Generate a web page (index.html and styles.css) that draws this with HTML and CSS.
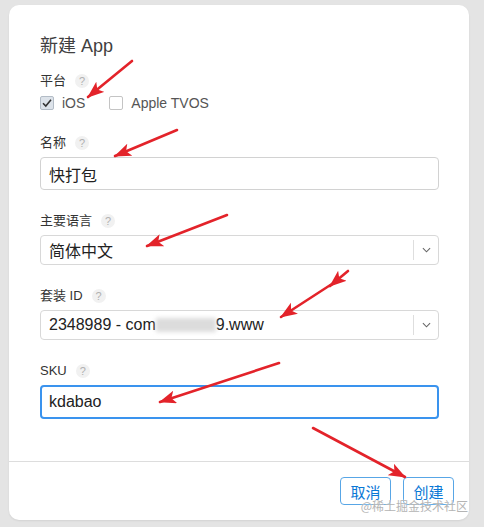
FILE: index.html
```html
<!DOCTYPE html>
<html lang="zh-CN">
<head>
<meta charset="utf-8">
<title>新建 App</title>
<link rel="stylesheet" href="styles.css">
</head>
<body>
<div class="page">
  <div class="card">
    <div class="card-body">
      <h1 class="title">新建 App</h1>

      <div class="label">平台 <span class="help">?</span></div>
      <div class="checks">
        <span class="check checked"><svg viewBox="0 0 14 14" width="14" height="14"><path d="M3 7.2 L5.8 10 L11 3.8" fill="none" stroke="#333" stroke-width="1.6"/></svg></span>
        <span class="check-text">iOS</span>
        <span class="check second"></span>
        <span class="check-text">Apple TVOS</span>
      </div>

      <div class="group">
        <div class="label">名称 <span class="help">?</span></div>
        <div class="input">快打包</div>
      </div>

      <div class="group">
        <div class="label">主要语言 <span class="help">?</span></div>
        <div class="select"><span class="value">简体中文</span><span class="chev"><svg viewBox="0 0 10 6" width="9" height="6"><path d="M1 1 L5 5 L9 1" fill="none" stroke="#666" stroke-width="1.2"/></svg></span></div>
      </div>

      <div class="group">
        <div class="label">套装 ID <span class="help">?</span></div>
        <div class="select"><span class="value">2348989 - com<span class="blur"></span>9.www</span><span class="chev"><svg viewBox="0 0 10 6" width="9" height="6"><path d="M1 1 L5 5 L9 1" fill="none" stroke="#666" stroke-width="1.2"/></svg></span></div>
      </div>

      <div class="group">
        <div class="label">SKU <span class="help">?</span></div>
        <div class="input focused">kdabao</div>
      </div>
    </div>
    <div class="card-footer">
      <button class="btn">取消</button>
      <button class="btn">创建</button>
    </div>
    <div class="watermark">@稀土掘金技术社区</div>
  </div>

  <svg class="arrows" width="484" height="527" viewBox="0 0 484 527">
    <defs>
      <marker id="ah" markerUnits="userSpaceOnUse" markerWidth="18" markerHeight="14" refX="16" refY="6.5" orient="auto">
        <path d="M0 0 L17 6.5 L0 13 L4 6.5 Z" fill="#e3232a"/>
      </marker>
    </defs>
    <g stroke="#e3232a" stroke-width="2.6" stroke-linecap="round" fill="none">
      <line x1="132" y1="61" x2="88" y2="97" marker-end="url(#ah)"/>
      <line x1="177" y1="130" x2="115" y2="156" marker-end="url(#ah)"/>
      <line x1="227" y1="215" x2="147" y2="246" marker-end="url(#ah)"/>
      <line x1="348" y1="271" x2="330" y2="286" marker-end="url(#ah)"/>
      <line x1="335" y1="282" x2="281" y2="317" marker-end="url(#ah)"/>
      <line x1="279" y1="363" x2="160" y2="402" marker-end="url(#ah)"/>
      <line x1="313" y1="428" x2="405" y2="477" marker-end="url(#ah)"/>
    </g>
  </svg>
</div>
</body>
</html>
```

FILE: styles.css
```css
* { box-sizing: border-box; }

html, body {
  margin: 0;
  padding: 0;
}

body {
  background: #e4e4e4;
  font-family: "Liberation Sans", "Noto Sans CJK SC", sans-serif;
  color: #333;
}

.page {
  position: relative;
  width: 484px;
  height: 527px;
  padding: 5px 0 0 9px;
}

.card {
  position: relative;
  width: 460px;
  height: 515px;
  background: #fff;
  border-radius: 10px;
  box-shadow: 0 1px 2px rgba(0,0,0,0.08);
  display: flex;
  flex-direction: column;
}

.card-body {
  padding: 29px 30px 0 31px;
  height: 457px;
  border-bottom: 1px solid #dddddd;
}

.title {
  margin: 0;
  font-size: 18px;
  line-height: 24px;
  font-weight: normal;
  color: #404040;
}

.label {
  display: flex;
  align-items: center;
  font-size: 13px;
  line-height: 18px;
  height: 18px;
  color: #333;
}

.title + .label {
  margin-top: 14px;
}

.help {
  display: inline-flex;
  align-items: center;
  justify-content: center;
  width: 14px;
  height: 14px;
  margin-left: 9px;
  border-radius: 50%;
  background: #f1f1f1;
  color: #b0b0b0;
  font-size: 11px;
  line-height: 14px;
}

.checks {
  display: flex;
  align-items: center;
  height: 18px;
  margin-top: 4px;
}

.check {
  width: 14px;
  height: 14px;
  border: 1px solid #c4c4c4;
  border-radius: 2px;
  background: #fff;
  display: inline-flex;
}

.check.checked {
  background: #dde3ea;
  border-color: #b3bcc6;
}

.check svg {
  margin: -1px;
}

.check.second {
  margin-left: 24px;
}

.check-text {
  margin-left: 8px;
  font-size: 14px;
  color: #555;
}

.group {
  margin-top: 22px;
}

.group .label {
  margin-bottom: 5px;
}

.input {
  width: 399px;
  height: 33px;
  border: 1px solid #d2d2d2;
  border-radius: 4px;
  padding: 0 8px;
  display: flex;
  align-items: center;
  font-size: 16px;
  color: #222;
}

.input.focused {
  border: 2px solid #3a93ee;
  padding: 0 7px;
  height: 34px;
}

.select {
  width: 399px;
  height: 30px;
  border: 1px solid #d8d8d8;
  border-radius: 4px;
  display: flex;
  align-items: center;
  font-size: 16px;
  color: #222;
}

.select .value {
  flex: 1;
  padding-left: 8px;
  display: flex;
  align-items: center;
  white-space: nowrap;
}

.blur {
  display: inline-block;
  width: 60px;
  height: 14px;
  background: #dcdcdc;
  filter: blur(2px);
}

.chev {
  width: 25px;
  height: 20px;
  border-left: 1px solid #dedede;
  display: flex;
  align-items: center;
  justify-content: center;
}

.card-footer {
  flex: 1;
  display: flex;
  justify-content: flex-end;
  align-items: flex-start;
  gap: 12px;
  padding: 15px 15px 0 0;
}

.btn {
  width: 51px;
  height: 28px;
  border: 1px solid #58a6e6;
  border-radius: 4px;
  background: #fff;
  color: #0a78d6;
  font-family: "Noto Sans CJK SC", sans-serif;
  font-size: 15px;
  padding: 0;
}

.watermark {
  position: absolute;
  right: 1px;
  bottom: 7px;
  font-family: "Noto Sans CJK SC", sans-serif;
  font-size: 12px;
  line-height: 14px;
  color: #b4b4b4;
  text-shadow: 0 0 2px #fff;
}

.arrows {
  position: absolute;
  left: 0;
  top: 0;
  pointer-events: none;
}
```
